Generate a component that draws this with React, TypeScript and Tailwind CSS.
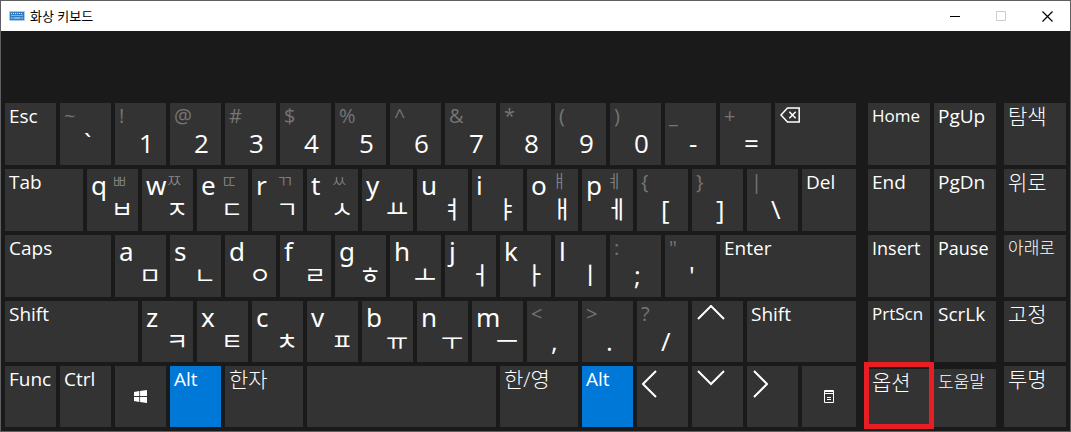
import React from 'react';

interface KeyData {
    label?: string;
    name?: string;
    // corner legends: base letter, shifted legend, lower right legend
    main?: string;
    shift?: string;
    low?: string;
    icon?: React.ReactNode;
    center?: boolean;
    grow?: string;
    active?: boolean;
    size?: string;
}

const chevron = (points: string, width: number, height: number) => (
    <svg width={width} height={height} viewBox={`0 0 ${width} ${height}`} fill="none" stroke="currentColor" strokeWidth="2">
        <polyline points={points} />
    </svg>
);

const BackspaceIcon = () => (
    <svg width="20" height="16" viewBox="0 0 20 16" fill="none" stroke="currentColor" strokeWidth="1.5">
        <path d="M1 8 7.5 1H19.2V15H7.5Z" />
        <path d="M9.3 4.8 15.7 11.2M15.7 4.8 9.3 11.2" />
    </svg>
);

const WindowsIcon = () => (
    <svg width="13" height="13" viewBox="0 0 13 13" fill="currentColor">
        <path d="M0 1.9 5.3 1.1V6.1H0ZM6.1 1 13 0V6.1H6.1ZM0 6.9H5.3V11.9L0 11.1ZM6.1 6.9H13V13L6.1 12Z" />
    </svg>
);

const MenuIcon = () => (
    <svg width="10" height="13" viewBox="0 0 10 13" fill="none" stroke="currentColor">
        <path d="M0.5 0.5H9.5V12.5H0.5ZM0.5 3.5H9.5M0.5 1.5H9.5M3 7.5H7M3 9.5H7" />
    </svg>
);

const KeyboardIcon = () => (
    <svg width="16" height="10" viewBox="0 0 16 10">
        <rect width="16" height="10" rx="1" fill="#a9cbea" />
        <rect x="1" y="1" width="14" height="8" fill="#2f7cc4" />
        <path d="M2 2.5H14M2.5 4.5H14" stroke="#d6e8f7" strokeDasharray="1 1" />
        <path d="M2 7H3.5M4.5 7H11.5M12.5 7H14" stroke="#d6e8f7" />
    </svg>
);

const rows: KeyData[][] = [
    [
        { label: 'Esc' },
        { shift: '~', low: '`' },
        { shift: '!', low: '1' },
        { shift: '@', low: '2' },
        { shift: '#', low: '3' },
        { shift: '$', low: '4' },
        { shift: '%', low: '5' },
        { shift: '^', low: '6' },
        { shift: '&', low: '7' },
        { shift: '*', low: '8' },
        { shift: '(', low: '9' },
        { shift: ')', low: '0' },
        { shift: '_', low: '-' },
        { shift: '+', low: '=' },
        { name: 'Backspace', icon: <BackspaceIcon />, grow: 'grow-[81]' },
    ],
    [
        { label: 'Tab', grow: 'grow-[78]' },
        { main: 'q', shift: 'ㅃ', low: 'ㅂ' },
        { main: 'w', shift: 'ㅉ', low: 'ㅈ' },
        { main: 'e', shift: 'ㄸ', low: 'ㄷ' },
        { main: 'r', shift: 'ㄲ', low: 'ㄱ' },
        { main: 't', shift: 'ㅆ', low: 'ㅅ' },
        { main: 'y', low: 'ㅛ' },
        { main: 'u', low: 'ㅕ' },
        { main: 'i', low: 'ㅑ' },
        { main: 'o', shift: 'ㅒ', low: 'ㅐ' },
        { main: 'p', shift: 'ㅖ', low: 'ㅔ' },
        { shift: '{', low: '[' },
        { shift: '}', low: ']' },
        { shift: '|', low: '\\' },
        { label: 'Del', grow: 'grow-[54]' },
    ],
    [
        { label: 'Caps', grow: 'grow-[106]' },
        { main: 'a', low: 'ㅁ' },
        { main: 's', low: 'ㄴ' },
        { main: 'd', low: 'ㅇ' },
        { main: 'f', low: 'ㄹ' },
        { main: 'g', low: 'ㅎ' },
        { main: 'h', low: 'ㅗ' },
        { main: 'j', low: 'ㅓ' },
        { main: 'k', low: 'ㅏ' },
        { main: 'l', low: 'ㅣ' },
        { shift: ':', low: ';' },
        { shift: '"', low: "'" },
        { label: 'Enter', grow: 'grow-[136]' },
    ],
    [
        { label: 'Shift', grow: 'grow-[133]' },
        { main: 'z', low: 'ㅋ' },
        { main: 'x', low: 'ㅌ' },
        { main: 'c', low: 'ㅊ' },
        { main: 'v', low: 'ㅍ' },
        { main: 'b', low: 'ㅠ' },
        { main: 'n', low: 'ㅜ' },
        { main: 'm', low: 'ㅡ' },
        { shift: '<', low: ',' },
        { shift: '>', low: '.' },
        { shift: '?', low: '/' },
        { name: 'Up', icon: chevron('1,14 14,1 27,14', 28, 16) },
        { label: 'Shift', grow: 'grow-[109]' },
    ],
    [
        { label: 'Func' },
        { label: 'Ctrl' },
        { name: 'Windows', icon: <WindowsIcon />, center: true },
        { label: 'Alt', active: true },
        { label: '한자', grow: 'grow-[78]', size: 'text-[21px] font-light' },
        { name: 'Space', grow: 'grow-[189]' },
        { label: '한/영', grow: 'grow-[78]', size: 'text-[21px] font-light' },
        { label: 'Alt', active: true },
        { name: 'Left', icon: chevron('14,1 1,14 14,27', 16, 28) },
        { name: 'Down', icon: chevron('1,1 14,14 27,1', 28, 16) },
        { name: 'Right', icon: chevron('2,1 15,14 2,27', 16, 28) },
        { name: 'Menu', icon: <MenuIcon />, center: true, grow: 'grow-[54]' },
    ],
];

const navRows: KeyData[][] = [
    [{ label: 'Home', size: 'text-[17px]' }, { label: 'PgUp' }],
    [{ label: 'End' }, { label: 'PgDn' }],
    [{ label: 'Insert', size: 'text-[18px]' }, { label: 'Pause', size: 'text-[18px]' }],
    [{ label: 'PrtScn', size: 'text-[17px]' }, { label: 'ScrLk' }],
];

const sideKeys: KeyData[] = [
    { label: '탐색', size: 'text-[21px] font-light' },
    { label: '위로', size: 'text-[21px] font-light' },
    { label: '아래로', size: 'text-[17px] font-light' },
    { label: '고정', size: 'text-[21px] font-light' },
    { label: '투명', size: 'text-[21px] font-light' },
];

const heights = ['h-[62px]', 'h-[62px]', 'h-[62px]', 'h-[61px]', 'h-[61px]'];

const Key: React.FC<{ data: KeyData; height: string }> = ({ data, height }) => {
    const { label, name, main, shift, low, icon, center, grow = 'grow-[51]', active, size = 'text-[19px]' } = data;
    const base = `flex min-w-0 basis-0 text-left whitespace-nowrap text-white ${grow} ${height} ${active ? 'bg-[#0078d7]' : 'bg-[#333333]'}`;

    if (low) {
        return (
            <button type="button" className={`${base} items-start`}>
                <span className="ml-1 grid grid-cols-[20px_24px] grid-rows-[26px_28px]">
                    {main ? (
                        <>
                            <span className="font-['Noto_Sans',sans-serif] text-[26px] leading-[32px]">{main}</span>
                            <span className="text-[18px] leading-[24px] font-light text-[#8c8c8c]">{shift}</span>
                        </>
                    ) : (
                        <span className="col-span-2 text-[20px] leading-[26px] text-[#757575]">{shift}</span>
                    )}
                    <span className={`col-start-2 leading-[28px] ${main ? 'text-[24px]' : 'text-[26px]'}`}>{low}</span>
                </span>
            </button>
        );
    }

    return (
        <button
            type="button"
            aria-label={name}
            className={`${base} ${size} leading-[26px] ${center ? 'items-center justify-center' : 'items-start'}`}
        >
            {icon && !center && <span className="ml-[5px] pt-1">{icon}</span>}
            {icon && center && icon}
            {label && <span className="ml-1">{label}</span>}
        </button>
    );
};

const TitleBar = () => (
    <header className="flex h-[30px] items-center bg-white pl-2 text-black">
        <KeyboardIcon />
        <h1 className="ml-[5px] grow text-[13px] leading-4">화상 키보드</h1>
        <button type="button" aria-label="Minimize" className="flex h-full w-[46px] items-center justify-center">
            <svg width="10" height="10" stroke="currentColor">
                <path d="M0 5.5H10" />
            </svg>
        </button>
        <button type="button" aria-label="Maximize" disabled className="flex h-full w-[46px] items-center justify-center text-[#cccccc]">
            <svg width="10" height="10" fill="none" stroke="currentColor">
                <path d="M0.5 0.5H9.5V9.5H0.5Z" />
            </svg>
        </button>
        <button type="button" aria-label="Close" className="flex h-full w-[46px] items-center justify-center">
            <svg width="11" height="11" stroke="currentColor" strokeWidth="1.2">
                <path d="M0.5 0.5 10.5 10.5M10.5 0.5 0.5 10.5" />
            </svg>
        </button>
    </header>
);

const App: React.FC = () => {
    return (
        <div className="min-h-screen border border-[#5f5e62] bg-[#1a1a1a] font-['Open_Sans','Noto_Sans_CJK_KR',sans-serif]">
            <TitleBar />
            <main className="flex px-1 pt-[72px] pb-[3px]">
                <div className="flex min-w-0 grow-[851] basis-0 flex-col gap-1">
                    {rows.map((row, i) => (
                        <div key={i} className="flex gap-1">
                            {row.map((data, j) => (
                                <Key key={j} data={data} height={heights[i]} />
                            ))}
                        </div>
                    ))}
                </div>
                <div className="ml-3 flex min-w-0 grow-[128] basis-0 flex-col gap-1">
                    {navRows.map((row, i) => (
                        <div key={i} className="flex gap-1">
                            {row.map((data, j) => (
                                <Key key={j} data={data} height={heights[i]} />
                            ))}
                        </div>
                    ))}
                    <div className="flex gap-1 pt-[3px]">
                        <div className="relative flex grow basis-0">
                            <Key data={{ label: '옵션', size: 'text-[21px] font-light' }} height="h-[58px]" />
                            <span className="pointer-events-none absolute -inset-x-1 -top-[7px] -bottom-0.5 border-5 border-[#e81e25]" />
                        </div>
                        <div className="flex grow basis-0">
                            <Key data={{ label: '도움말', size: 'text-[17px] font-light' }} height="h-[58px]" />
                        </div>
                    </div>
                </div>
                <div className="ml-2 flex min-w-0 grow-[62] basis-0 flex-col gap-1">
                    {sideKeys.map((data, i) => (
                        <div key={i} className="flex">
                            <Key data={data} height={heights[i]} />
                        </div>
                    ))}
                </div>
            </main>
        </div>
    );
};

export default App;
